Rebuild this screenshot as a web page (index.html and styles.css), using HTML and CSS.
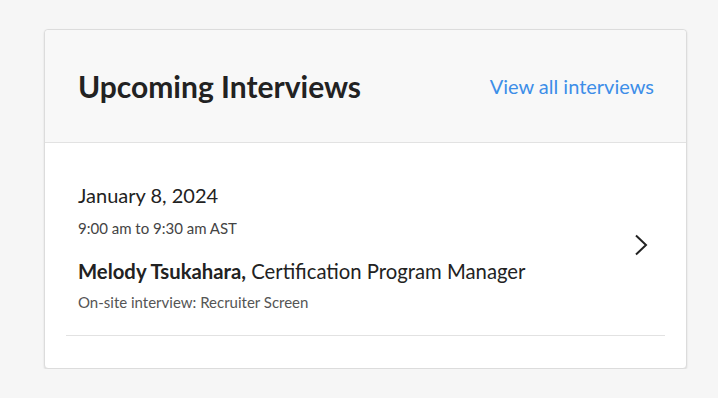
FILE: index.html
```html
<!DOCTYPE html>
<html lang="en">
<head>
<meta charset="UTF-8">
<title>Upcoming Interviews</title>
<link rel="stylesheet" href="styles.css">
</head>
<body>
<div class="card">
  <div class="card-header">
    <h2>Upcoming Interviews</h2>
    <a href="#" class="view-all">View all interviews</a>
  </div>
  <div class="card-body">
    <a href="#" class="interview">
      <div class="info">
        <div class="date">January 8, 2024</div>
        <div class="time">9:00 am to 9:30 am AST</div>
        <div class="person"><strong>Melody Tsukahara,</strong> Certification Program Manager</div>
        <div class="kind">On-site interview: Recruiter Screen</div>
      </div>
      <svg class="chevron" width="14" height="22" viewBox="0 0 14 22">
        <path d="M2 1.5 L12 11 L2 20.5" fill="none" stroke="#222" stroke-width="2"/>
      </svg>
    </a>
  </div>
</div>
</body>
</html>
```

FILE: styles.css
```css
body {
  margin: 0;
  background: #f6f6f6;
  font-family: "Lato", "Open Sans", sans-serif;
  color: #222;
}
.card {
  margin: 29px 0 0 44px;
  width: 641px;
  background: #fff;
  border: 1px solid #dcdcdc;
  border-radius: 4px;
  box-shadow: 0 1px 2px rgba(0, 0, 0, 0.12);
}
.card-header {
  display: flex;
  justify-content: space-between;
  align-items: center;
  height: 112px;
  padding: 0 32px 0 33px;
  background: #f8f8f8;
  border-bottom: 1px solid #e2e2e2;
  border-radius: 4px 4px 0 0;
}
.card-header h2 {
  margin: 0;
  font-size: 30px;
  font-weight: 700;
  color: #222;
}
.view-all {
  font-size: 20px;
  color: #3d8ee8;
  text-decoration: none;
}
.card-body { padding: 0 21px 32px; }
.interview {
  display: flex;
  align-items: center;
  justify-content: space-between;
  padding: 40px 17px 24px 12px;
  border-bottom: 1px solid #e2e2e2;
  color: #222;
  text-decoration: none;
}
.date { font-size: 20px; }
.time { font-size: 15px; color: #444; margin-top: 12px; }
.person { font-size: 20.3px; margin-top: 22px; }
.person strong { font-weight: 700; }
.kind { font-size: 15px; color: #555; margin-top: 10px; }
.chevron { margin-top: -4px; }
```
